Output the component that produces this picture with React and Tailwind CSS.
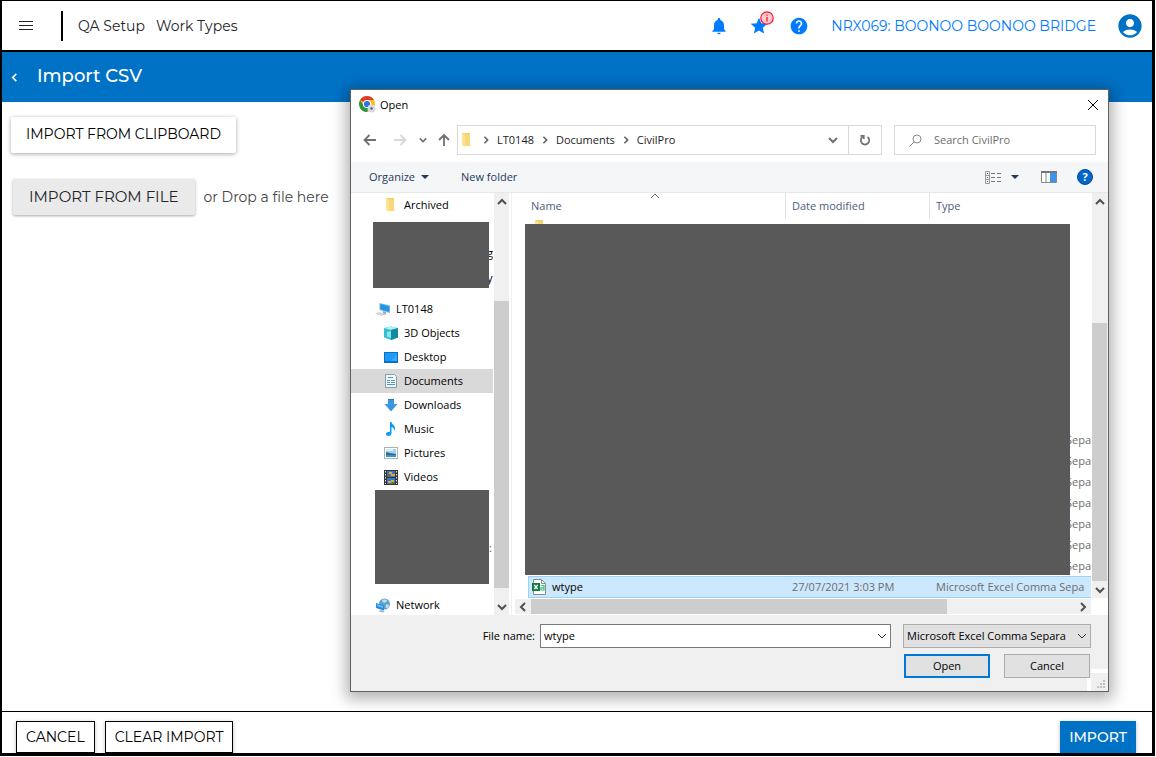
import React from "react";
import { MdNotifications, MdStar, MdHelp, MdAccountCircle } from "react-icons/md";

function Chevron({ dir = "down", className = "", size = 10, weight = 2 }) {
  const d = {
    down: "M1 3l4 4 4-4",
    up: "M1 7l4-4 4 4",
    left: "M7 1L3 5l4 4",
    right: "M3 1l4 4-4 4",
  }[dir];
  return (
    <svg width={size} height={size} viewBox="0 0 10 10" fill="none" stroke="currentColor" strokeWidth={weight} className={className} aria-hidden="true">
      <path d={d} />
    </svg>
  );
}

function ChromeIcon() {
  return (
    <svg width="17" height="17" viewBox="0 0 17 17" aria-hidden="true">
      <circle cx="8" cy="8" r="8" fill="#fbc116" />
      <path d="M8 8L1.1 4A8 8 0 0 1 14.9 4H8z" fill="#e33b2e" />
      <path d="M1.1 4A8 8 0 0 0 8 16l3.4-6L8 8 4.5 9.8z" fill="#279847" />
      <circle cx="8" cy="8" r="4" fill="#fff" />
      <circle cx="8" cy="8" r="3.1" fill="#2f73e0" />
      <circle cx="12.5" cy="12.5" r="4" fill="#d5dae3" />
      <circle cx="12.5" cy="12.5" r="1.2" fill="#56606e" />
    </svg>
  );
}

function FolderIcon() {
  return (
    <svg width="16" height="16" viewBox="0 0 16 16" aria-hidden="true">
      <path d="M3 1h8v12H3z" fill="#f5cf6b" />
      <path d="M3 1l3 2v12l-3-2z" fill="#fde399" />
      <path d="M6 3h5v10l1.5 1H6z" fill="#fbd876" />
    </svg>
  );
}

function ComputerIcon() {
  return (
    <svg width="16" height="16" viewBox="0 0 16 16" aria-hidden="true">
      <path d="M4.500 2L15 4.500V12L4.500 9z" fill="#7fb5dc" />
      <path d="M5.300 3L14.200 5.200V10.800L5.300 8.300z" fill="#1c97ea" />
      <path d="M8 10l3 1v2l-3-1z" fill="#9aa3aa" />
      <path d="M0 12.500L4 11l6 2-4 2z" fill="#d3d7da" />
      <path d="M7 13l3-1 2 1-3 1z" fill="#b3b9bd" />
    </svg>
  );
}

function CubeIcon() {
  return (
    <svg width="16" height="16" viewBox="0 0 16 16" aria-hidden="true">
      <path d="M1 3l7-1.500L15 3v9.500L8 15l-7-2.500z" fill="#35bfd1" />
      <path d="M1 3l7-1.500L15 3 8 5z" fill="#b4eef2" />
      <path d="M8 5l7-2v9.500L8 15z" fill="#1389a2" />
      <path d="M4 7l4-1v7l-4-1.500z" fill="#8fe3ea" />
    </svg>
  );
}

function DesktopIcon() {
  return (
    <svg width="16" height="16" viewBox="0 0 16 16" aria-hidden="true">
      <rect x="1" y="3" width="14" height="11" fill="#0b6fc0" />
      <rect x="2" y="4" width="12" height="8" fill="#1a9bf7" />
      <path d="M8 12l6-7v7z" fill="#35abff" />
    </svg>
  );
}

function DocumentIcon() {
  return (
    <svg width="16" height="16" viewBox="0 0 16 16" aria-hidden="true">
      <path d="M2.500 1.500h9l2 2v11h-11z" fill="#f5f8fa" stroke="#8c9aa3" />
      <path d="M5 4.500h5M4 7.500h3M8 7.500h4M4 9.500h3M4 11.500h8" stroke="#3d9bd1" />
      <path d="M8 9.500h4" stroke="#7c8b96" />
    </svg>
  );
}

function DownloadIcon() {
  return (
    <svg width="16" height="16" viewBox="0 0 16 16" aria-hidden="true">
      <path d="M5 2h6v5h3.500L8 14.500 1.500 7H5z" fill="#3a96dd" />
      <path d="M5 2h6v1H5z" fill="#2779bd" />
    </svg>
  );
}

function MusicIcon() {
  return (
    <svg width="16" height="16" viewBox="0 0 16 16" aria-hidden="true">
      <path d="M7 1h1.500c.5 3 4 3.200 3.500 6.800-.2 1-.6 1.700-1 2.200.3-2.500-.8-3.700-2.500-4v6.500C8.500 14 7 15 5.300 15 4 15 3 14.200 3 13s1.300-2.500 4-2.300z" fill="#0c9bf2" />
    </svg>
  );
}

function PictureIcon() {
  return (
    <svg width="16" height="16" viewBox="0 0 16 16" aria-hidden="true">
      <rect x="1.500" y="2.500" width="13" height="11" fill="#fff" stroke="#a9b2b8" />
      <rect x="3" y="4" width="10" height="8" fill="#9fd2f3" />
      <path d="M3 4h7v2H3z" fill="#d8effb" />
      <path d="M3 7l4 1 6 1v1H3z" fill="#2c7186" />
      <path d="M3 10h10v2H3z" fill="#3e92c8" />
    </svg>
  );
}

function VideoIcon() {
  return (
    <svg width="16" height="16" viewBox="0 0 16 16" aria-hidden="true">
      <rect x="1" y="1" width="14" height="15" fill="#353535" />
      <path d="M2.500 2v13M13.500 2v13" stroke="#e6e6e6" strokeDasharray="1.500 1.500" />
      <rect x="4" y="2" width="8" height="6" fill="#3976d1" />
      <rect x="4" y="9" width="8" height="6" fill="#3976d1" />
      <path d="M6 3h3v2h3v2H8V5H6zM5 12h3v-1h3v2H8v1H5z" fill="#e5ab2f" />
      <path d="M4 6h3v2H4zM9 13h3v2H9z" fill="#3f8147" />
    </svg>
  );
}

function NetworkIcon() {
  return (
    <svg width="16" height="16" viewBox="0 0 16 16" aria-hidden="true">
      <circle cx="9.500" cy="7" r="5.500" fill="#5f9fc8" />
      <path d="M7 3c3-2 5 0 5.500 1l-3 2-2-1zM11 7l3.500 1-2 3.500-2-1z" fill="#b8dded" />
      <path d="M1 6l8 2.500v5L1 11z" fill="#228de0" />
      <path d="M2 7.200l6 1.900v2L2 9z" fill="#5cc0f7" />
      <path d="M5 13l5 1-2 1.500-4-1z" fill="#aab2b8" />
    </svg>
  );
}

function CsvIcon() {
  return (
    <svg width="16" height="16" viewBox="0 0 16 16" aria-hidden="true">
      <path d="M2.500.5h8l4 4v11h-12z" fill="#fff" stroke="#8d8d8d" />
      <path d="M10.500.5v4h4" fill="none" stroke="#8d8d8d" />
      <rect x="1" y="4" width="8" height="8" fill="#107c41" />
      <path d="M3.300 6l3.400 4M6.700 6l-3.400 4" stroke="#fff" strokeWidth="1.300" />
      <path d="M10 6.500h3V11h-3V8.800h3" fill="none" stroke="#33c481" strokeWidth="1.200" />
    </svg>
  );
}

const places = [
  { label: "3D Objects", Icon: CubeIcon },
  { label: "Desktop", Icon: DesktopIcon },
  { label: "Documents", Icon: DocumentIcon, active: true },
  { label: "Downloads", Icon: DownloadIcon },
  { label: "Music", Icon: MusicIcon },
  { label: "Pictures", Icon: PictureIcon },
  { label: "Videos", Icon: VideoIcon },
];

function TreeItem({ label, Icon, active, root }) {
  return (
    <li className="pr-px">
      <button
        type="button"
        className={`flex h-6 w-full items-center gap-[5px] text-left whitespace-nowrap ${root ? "pl-6" : "pl-8"} ${active ? "bg-[#d9d9d9]" : ""}`}
      >
        <Icon />
        <span>{label}</span>
      </button>
    </li>
  );
}

function Sidebar() {
  return (
    <nav aria-label="Folders" className="w-[143px] shrink-0 overflow-hidden">
      <ul>
        <TreeItem label="Archived" Icon={FolderIcon} />
      </ul>
      <div className="flex h-20 pt-[5px] pl-[22px]">
        <div className="z-10 h-[66px] w-[116px] shrink-0 bg-[#595959]" />
        <div className="-ml-0.5 pt-[18px] leading-[25px]">
          <div>g</div>
          <div>y</div>
        </div>
      </div>
      <ul>
        <TreeItem label="LT0148" Icon={ComputerIcon} root />
        {places.map((p) => (
          <TreeItem key={p.label} {...p} />
        ))}
      </ul>
      <div className="flex h-[104px] items-start pt-px pl-6">
        <div className="h-[94px] w-[114px] shrink-0 bg-[#595959]" />
        <span className="pt-[50px] text-[#27509b]">:</span>
      </div>
      <ul>
        <TreeItem label="Network" Icon={NetworkIcon} root />
      </ul>
    </nav>
  );
}

function VerticalScrollbar({ before, thumb, after }) {
  return (
    <div className="flex w-[15px] shrink-0 flex-col items-center justify-between bg-[#f0f0f0] text-[#505050]">
      <div className="flex h-[18px] shrink-0 items-center">
        <Chevron dir="up" />
      </div>
      <div className="flex w-full flex-1 flex-col">
        <div className={before} />
        <div className={`w-full bg-[#cdcdcd] ${thumb}`} />
        <div className={after} />
      </div>
      <div className="flex h-[17px] shrink-0 items-center">
        <Chevron />
      </div>
    </div>
  );
}

const fileRows = Array.from({ length: 17 }, (_, i) => ({ id: i, type: i >= 10 ? "Sepa" : "" }));

function FileList() {
  return (
    <div className="flex min-w-0 flex-1 flex-col">
      <div className="flex min-h-0 flex-1">
        <div className="relative mr-px min-w-0 flex-1 overflow-hidden">
          <Chevron dir="up" weight={1} className="absolute top-[-2px] left-[135px] text-[#666]" />
          <table className="w-full table-fixed border-separate border-spacing-0">
            <colgroup>
              <col className="w-[13px]" />
              <col />
              <col className="w-36" />
              <col className="w-[162px]" />
            </colgroup>
            <thead>
              <tr className="h-[26px] text-left text-[#4c607a]">
                <th />
                <th className="pl-[3px] font-normal">Name</th>
                <th className="border-l border-[#e3e3e3] pl-1.5 font-normal">Date modified</th>
                <th className="border-l border-[#e3e3e3] pl-1.5 font-normal">Type</th>
              </tr>
            </thead>
            <tbody className="text-[#6d6d6d]">
              {fileRows.map((r) => (
                <tr key={r.id} className="h-[21px]">
                  <td />
                  <td className="p-0 pl-1 align-top">{r.id === 0 && <FolderIcon />}</td>
                  <td />
                  <td className="p-0 text-right">{r.type}</td>
                </tr>
              ))}
              <tr className="h-[22px]">
                <td />
                <td className="border-y border-l border-[#99d1ff] bg-[#cce8ff] p-0 pl-[2px] text-black">
                  <span className="flex items-center gap-[5px]">
                    <CsvIcon />
                    wtype
                  </span>
                </td>
                <td className="border-y border-[#99d1ff] bg-[#cce8ff] p-0 pl-[7px] whitespace-nowrap">27/07/2021 3:03 PM</td>
                <td className="overflow-hidden border-y border-[#99d1ff] bg-[#cce8ff] p-0 pl-[7px] whitespace-nowrap">Microsoft Excel Comma Sepa</td>
              </tr>
            </tbody>
          </table>
          <div className="absolute top-[31px] right-[21px] bottom-[23px] left-[10px] bg-[#595959]" />
        </div>
        <VerticalScrollbar before="grow-[112]" thumb="grow-[258]" after="grow-0" />
        <div className="w-px bg-[#f0f0f0]" />
      </div>
      <div className="my-px flex h-[15px] shrink-0 pr-[17px]">
        <div className="flex flex-1 items-center bg-[#f0f0f0] text-[#505050]">
          <div className="flex w-4 shrink-0 justify-center">
            <Chevron dir="left" />
          </div>
          <div className="h-[15px] grow-[416] bg-[#cdcdcd]" />
          <div className="grow-[127]" />
          <div className="flex w-[17px] shrink-0 justify-center">
            <Chevron dir="right" />
          </div>
        </div>
      </div>
    </div>
  );
}

function AddressBar() {
  return (
    <div className="flex h-[30px] items-stretch pr-3 pl-3 text-[#222]">
      <div className="flex w-[94px] shrink-0 items-center text-[#707070]">
        <button type="button" aria-label="Back">
          <svg width="14" height="12" viewBox="0 0 14 12" fill="none" stroke="currentColor" strokeWidth="1.800" aria-hidden="true">
            <path d="M6.500 1l-5 5 5 5M1.500 6H13" />
          </svg>
        </button>
        <button type="button" aria-label="Forward" className="ml-4 text-[#d8d8d8]">
          <svg width="14" height="12" viewBox="0 0 14 12" fill="none" stroke="currentColor" strokeWidth="1.800" aria-hidden="true">
            <path d="M7.500 1l5 5-5 5M12.500 6H1" />
          </svg>
        </button>
        <button type="button" aria-label="Recent locations" className="ml-3">
          <Chevron size={8} />
        </button>
        <button type="button" aria-label="Up" className="ml-2.5">
          <svg width="14" height="14" viewBox="0 0 14 14" fill="none" stroke="currentColor" strokeWidth="1.800" aria-hidden="true">
            <path d="M2 7l5-5 5 5M7 2v11" />
          </svg>
        </button>
      </div>
      <div className="flex flex-1 items-center border border-[#d9d9d9] pl-px">
        <FolderIcon />
        {["LT0148", "Documents", "CivilPro"].map((name) => (
          <React.Fragment key={name}>
            <Chevron dir="right" size={8} className="mx-[7px] text-[#606060]" />
            <span>{name}</span>
          </React.Fragment>
        ))}
        <button type="button" aria-label="Previous locations" className="mr-2.5 ml-auto text-[#707070]">
          <Chevron />
        </button>
        <button type="button" aria-label="Refresh" className="flex h-full w-[33px] items-center justify-center border-l border-[#d9d9d9] text-[#707070]">
          <svg width="12" height="12" viewBox="0 0 12 12" fill="none" stroke="currentColor" strokeWidth="1.700" aria-hidden="true">
            <path d="M8.500 3A4.200 4.200 0 1 1 3.500 3M1.500 1.800h3.300v3.300" />
          </svg>
        </button>
      </div>
      <label className="ml-3 flex w-[202px] shrink-0 items-center gap-3 border border-[#d9d9d9] pl-3.5">
        <svg width="13" height="13" viewBox="0 0 13 13" fill="none" stroke="#888" className="shrink-0" aria-hidden="true">
          <circle cx="8" cy="5" r="4" />
          <path d="M5 8l-4.500 4.500" />
        </svg>
        <input type="search" aria-label="Search CivilPro" placeholder="Search CivilPro" className="w-full min-w-0 bg-transparent outline-none placeholder:text-[#6d6d6d]" />
      </label>
    </div>
  );
}

function Toolbar() {
  return (
    <div className="mt-[7px] flex h-[31px] shrink-0 items-center border-b border-[#e8e8e8] bg-[#f4f6f8] pr-[15px] pl-[18px] text-[#1e395b]">
      <button type="button" className="flex items-center gap-1.5">
        Organize
        <svg width="8" height="4" viewBox="0 0 8 4" aria-hidden="true">
          <path d="M0 0h8L4 4z" fill="currentColor" />
        </svg>
      </button>
      <button type="button" className="ml-8">New folder</button>
      <button type="button" aria-label="Change view" className="ml-auto flex items-center gap-2.5">
        <svg width="16" height="13" viewBox="0 0 16 13" fill="none" aria-hidden="true">
          <path d="M.5.5h4v12h-4zM.5 4.500h4M.5 8.500h4" stroke="#999" />
          <path d="M6 2.500h4M12 2.500h4M6 6.500h4M12 6.500h4M6 10.500h4M12 10.500h4" stroke="#777" />
          <path d="M2 2.500h1" stroke="#333" />
          <path d="M2 6.500h1" stroke="#1672c4" />
          <path d="M2 10.500h1" stroke="#c33" />
        </svg>
        <svg width="8" height="4" viewBox="0 0 8 4" aria-hidden="true">
          <path d="M0 0h8L4 4z" fill="currentColor" />
        </svg>
      </button>
      <button type="button" aria-label="Show the preview pane" className="ml-[22px]">
        <svg width="16" height="12" viewBox="0 0 16 12" fill="none" aria-hidden="true">
          <path d="M.5.500h15v11H.5zM5 1v10" fill="#fff" stroke="#888" />
          <path d="M0 1h16" stroke="#777" strokeWidth="2" />
          <path d="M9 2h6v9H9z" fill="#3a97e8" />
        </svg>
      </button>
      <button type="button" aria-label="Get help" className="ml-5 flex size-4 items-center justify-center rounded-full border border-[#0a4a94] bg-[#0066cc] font-bold text-white">
        ?
      </button>
    </div>
  );
}

function OpenDialog() {
  return (
    <section
      role="dialog"
      aria-label="Open"
      className="absolute top-[89px] right-[47px] left-[350px] flex h-[603px] flex-col border border-[#606060] bg-white font-['Open_Sans','Liberation_Sans',sans-serif] text-[11px] leading-4 text-black shadow-[0_3px_14px_4px_rgba(0,0,0,0.3)]"
    >
      <div className="flex h-[35px] shrink-0 items-center gap-1 pr-2.5 pb-1.5 pl-2">
        <ChromeIcon />
        <h2>Open</h2>
        <button type="button" aria-label="Close" className="ml-auto">
          <svg width="10" height="10" viewBox="0 0 10 10" stroke="#000" aria-hidden="true">
            <path d="M0 0l10 10M10 0L0 10" />
          </svg>
        </button>
      </div>
      <AddressBar />
      <Toolbar />
      <div className="flex min-h-0 flex-1">
        <Sidebar />
        <VerticalScrollbar before="grow-[90]" thumb="grow-[287]" after="grow-[10]" />
        <div className="ml-0.5 w-1 border-l border-[#f0f0f0]" />
        <FileList />
      </div>
      <form className="relative flex h-[76px] shrink-0 flex-col gap-1.5 bg-[#f0f0f0] pt-[9px] pr-[17px]" onSubmit={(e) => e.preventDefault()}>
        <div className="flex h-6 items-stretch">
          <label htmlFor="file-name" className="w-[184px] shrink-0 self-center text-right">File name:</label>
          <div className="relative ml-[5px] flex flex-1">
            <input id="file-name" type="text" defaultValue="wtype" className="w-full min-w-0 border border-[#7a7a7a] bg-white pr-5 pl-[3px] outline-none" />
            <Chevron weight={1} className="absolute top-[7px] right-1 text-[#333]" />
          </div>
          <div className="relative ml-3 flex w-[188px]">
            <select aria-label="File type" className="w-full appearance-none border border-[#adadad] bg-[#e1e1e1] pr-4 pl-[3px] outline-none">
              <option>Microsoft Excel Comma Separa</option>
            </select>
            <Chevron weight={1} className="pointer-events-none absolute top-[7px] right-1 text-[#333]" />
          </div>
        </div>
        <div className="flex h-6 justify-end gap-3.5 pr-px">
          <button type="submit" className="w-[86px] border-2 border-[#0078d7] bg-[#e1e1e1]">Open</button>
          <button type="button" className="w-[86px] border border-[#adadad] bg-[#e1e1e1]">Cancel</button>
        </div>
        <svg width="21" height="22" viewBox="0 0 21 22" className="absolute right-0 bottom-0" aria-hidden="true">
          <path d="M4 0h17v4H4zM0 9h4v13H0z" fill="#fff" />
          <path d="M10 17h2v2h-2zM13 17h2v2h-2zM16 17h2v2h-2zM13 14h2v2h-2zM16 14h2v2h-2zM16 11h2v2h-2z" fill="#bfbfbf" />
        </svg>
      </form>
    </section>
  );
}

function Header() {
  return (
    <header className="flex h-[51px] shrink-0 items-center border-b-2 border-black pr-2 pl-[17px]">
      <button type="button" aria-label="Menu">
        <svg width="14" height="10" viewBox="0 0 14 10" stroke="#222" aria-hidden="true">
          <path d="M0 .5h14M0 4.500h14M0 8.500h14" strokeWidth="1.200" />
        </svg>
      </button>
      <div className="ml-7 h-[30px] w-0.5 bg-black" />
      <nav className="ml-[15px] flex gap-[11px]">
        <a href="#setup">QA Setup</a>
        <a href="#types">Work Types</a>
      </nav>
      <div className="ml-auto flex items-center text-[#007bff]">
        <button type="button" aria-label="Notifications">
          <MdNotifications size={20} />
        </button>
        <button type="button" aria-label="Favourites" className="relative ml-5">
          <MdStar size={20} />
          <svg width="14" height="14" viewBox="0 0 14 14" className="absolute -top-[5px] left-[11px]" fill="none" aria-hidden="true">
            <circle cx="7" cy="7" r="6.200" fill="#ffc9cf" stroke="#f5152a" strokeWidth="1.200" />
            <path d="M7 3.500v1.300M7 6v4.500" stroke="#f5152a" strokeWidth="1.300" />
          </svg>
        </button>
        <button type="button" aria-label="Help" className="ml-5">
          <MdHelp size={20} />
        </button>
        <a href="#project" className="ml-[22px]">NRX069: BOONOO BOONOO BRIDGE</a>
        <button type="button" aria-label="Account" className="ml-5 text-[#0072c6]">
          <MdAccountCircle size={28} />
        </button>
      </div>
    </header>
  );
}

export default function App() {
  return (
    <div className="relative flex min-h-screen flex-col bg-white pr-px pb-px font-['Montserrat','Inter',sans-serif] text-sm leading-5 text-[#212529]">
      <div className="flex flex-1 flex-col border-t border-r-[3px] border-b-[3px] border-l-2 border-black">
        <Header />
        <div className="flex h-[50px] shrink-0 items-center bg-[#0072c6] pl-2 text-white">
          <button type="button" aria-label="Back">
            <Chevron dir="left" size={9} weight={1.8} />
          </button>
          <h1 className="ml-[18px] pb-0.5 text-lg leading-6 font-medium">Import CSV</h1>
        </div>
        <main className="flex flex-1 flex-col items-start pt-[15px] pl-[9px]">
          <button type="button" className="h-9 rounded-xs bg-white px-[15px] pb-0.5 text-black shadow-[0_1px_4px_rgba(0,0,0,0.35)]">
            IMPORT FROM CLIPBOARD
          </button>
          <div className="mt-[26px] ml-0.5 flex items-center gap-[9px]">
            <button type="button" className="h-9 rounded-xs bg-[#eaeaea] px-4 text-[15px] shadow-[0_1px_3px_rgba(0,0,0,0.35)]">
              IMPORT FROM FILE
            </button>
            <span className="text-[#444]">or Drop a file here</span>
          </div>
        </main>
        <footer className="flex h-[42px] shrink-0 items-stretch gap-2.5 border-t border-black pt-[9px] pr-4 pl-3.5 text-black">
          <button type="button" className="border border-black px-[9px] shadow-[0_1px_4px_rgba(0,0,0,0.25)]">CANCEL</button>
          <button type="button" className="border border-black px-[9px] shadow-[0_1px_4px_rgba(0,0,0,0.25)]">CLEAR IMPORT</button>
          <button type="button" className="ml-auto bg-[#0072c6] px-[9px] font-medium text-white shadow-[0_1px_4px_rgba(0,0,0,0.25)]">IMPORT</button>
        </footer>
      </div>
      <OpenDialog />
    </div>
  );
}
